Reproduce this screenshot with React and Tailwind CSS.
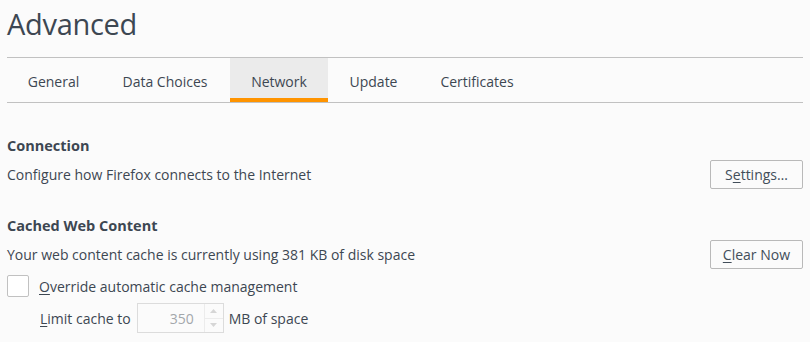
import React, { useState } from "react";

// tab widths taken from the native prefs page
const tabs = [
  { label: "General", width: "w-[93px]" },
  { label: "Data Choices", width: "w-[130px]" },
  { label: "Network", width: "w-[98px]" },
  { label: "Update", width: "w-[91px]" },
  { label: "Certificates", width: "w-[116px]" },
];

// underline the access key letter like the native prefs page
const AccessKey = ({ text, index }) => (
  <>
    {text.slice(0, index)}
    <span className="underline underline-offset-2">{text[index]}</span>
    {text.slice(index + 1)}
  </>
);

const PrefButton = ({ children }) => (
  <button className="h-[29px] min-w-[93px] px-3 rounded-[2px] border border-[#b9b9b9] bg-[#fbfbfb] text-[#424e5a] text-[14px] leading-none hover:bg-[#ebebeb]">
    {children}
  </button>
);

export default function App() {
  const [activeTab, setActiveTab] = useState("Network");
  const [override, setOverride] = useState(false);

  return (
    <div
      className="min-h-[342px] bg-[#fbfbfb] text-[#3d4752] px-[7px]"
      style={{ fontFamily: '"Open Sans", "Noto Sans", sans-serif' }}
    >
      <div className="w-[796px]">
        {/* Header */}
        <h1 className="h-[57px] pt-[4px] text-[29px] font-normal leading-[40px] tracking-[-0.3px]">
          Advanced
        </h1>

        {/* Tabs */}
        <div className="flex h-[46px] border-y border-[#c1c1c1]">
          {tabs.map((tab) => (
            <button
              key={tab.label}
              onClick={() => setActiveTab(tab.label)}
              className={`relative ${tab.width} pt-[3px] text-[14px] ${
                activeTab === tab.label ? "bg-[#ebebeb]" : ""
              }`}
            >
              {tab.label}
              {activeTab === tab.label && (
                <span className="absolute left-0 right-0 bottom-0 h-[4px] bg-[#ff9400]" />
              )}
            </button>
          ))}
        </div>

        {/* Connection */}
        <div className="pt-[33px]">
          <h2 className="text-[14.5px] font-bold leading-[20px]">Connection</h2>
          <div className="flex items-center justify-between mt-[4px]">
            <span className="text-[14px]">
              Configure how Firefox connects to the Internet
            </span>
            <PrefButton>
              <AccessKey text="Settings…" index={1} />
            </PrefButton>
          </div>
        </div>

        {/* Cached Web Content */}
        <div className="pt-[27px]">
          <h2 className="text-[14.5px] font-bold leading-[20px]">
            Cached Web Content
          </h2>
          <div className="flex items-center justify-between mt-[4px]">
            <span className="text-[14px]">
              Your web content cache is currently using 381 KB of disk space
            </span>
            <PrefButton>
              <AccessKey text="Clear Now" index={0} />
            </PrefButton>
          </div>

          <label className="flex items-center gap-[10px] mt-[6px] h-[22px] text-[14px]">
            <input
              type="checkbox"
              checked={override}
              onChange={(e) => setOverride(e.target.checked)}
              className="appearance-none w-[22px] h-[22px] rounded-[2px] border border-[#c1c1c1] bg-white checked:bg-[#0996f8]"
            />
            <span>
              <AccessKey text="Override automatic cache management" index={0} />
            </span>
          </label>

          <div className="flex items-center mt-[6px] pl-[33px] text-[14px]">
            <span className="mr-[6px]">
              <AccessKey text="Limit cache to" index={0} />
            </span>
            <div className="flex h-[30px] w-[87px] border border-[#dcdcdc] bg-[#fbfbfb]">
              <input
                disabled={!override}
                defaultValue="350"
                className="w-[66px] pr-[10px] text-right text-[14px] text-[#a3a7ab] bg-transparent outline-none"
              />
              <div className="flex flex-col w-[19px] border-l border-[#ececec] py-[1px]">
                <span className="flex-1 flex items-center justify-center border-b border-[#ececec]">
                  <svg width="7" height="4" viewBox="0 0 7 4">
                    <path d="M0 4 L3.5 0 L7 4 Z" fill="#d6d6d6" />
                  </svg>
                </span>
                <span className="flex-1 flex items-center justify-center">
                  <svg width="7" height="4" viewBox="0 0 7 4">
                    <path d="M0 0 L3.5 4 L7 0 Z" fill="#d6d6d6" />
                  </svg>
                </span>
              </div>
            </div>
            <span className="ml-[5px]">MB of space</span>
          </div>
        </div>
      </div>
    </div>
  );
}
